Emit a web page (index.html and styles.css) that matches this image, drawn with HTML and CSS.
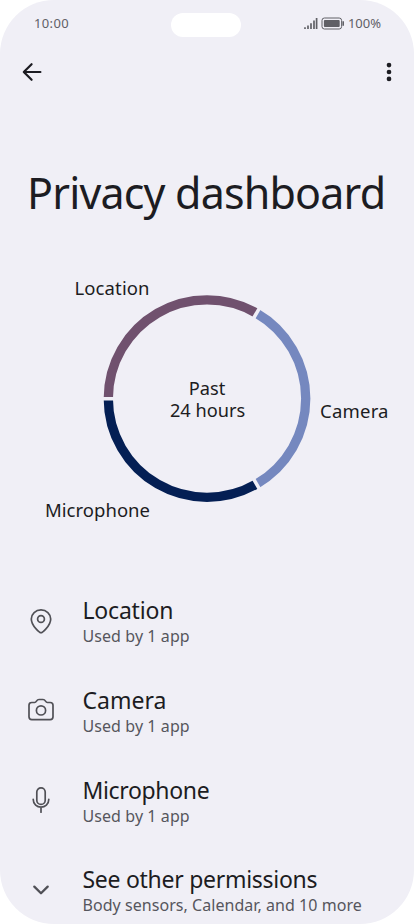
FILE: index.html
```html
<!DOCTYPE html>
<html lang="en">
<head>
<meta charset="utf-8">
<meta name="viewport" content="width=device-width, initial-scale=1">
<title>Privacy dashboard</title>
<link rel="stylesheet" href="styles.css">
</head>
<body>
<main class="screen">
  <header class="status">
    <span class="clock">10:00</span>
    <span class="cutout"></span>
    <div class="indicators">
      <svg class="signal" width="14" height="13" viewBox="0 0 14 13"><path d="M1 10.3V12M4 8.5V12M7 6.2V12M10 3.6V12M12.600 1V12" /></svg>
      <svg class="battery" width="24" height="13" viewBox="0 0 24 13"><rect class="shell" x="1" y="1" width="19.600" height="11" rx="2.400"/><rect class="charge" x="2.900" y="2.900" width="15.800" height="7.200" rx="1"/><path class="cap" d="M22.200 4.200v4.600"/></svg>
      <span class="percent">100%</span>
    </div>
  </header>
  <nav class="toolbar">
    <svg class="back" width="20" height="20" viewBox="0 0 20 20"><path d="M18.400 10H2.200M9.600 2.200L1.800 10l7.800 7.800"/></svg>
    <svg class="more" width="6" height="20" viewBox="0 0 6 20"><circle cx="3" cy="3.100" r="2.350"/><circle cx="3" cy="10" r="2.350"/><circle cx="3" cy="16.900" r="2.350"/></svg>
  </nav>
  <h1 class="heading">Privacy dashboard</h1>
  <svg class="chart" width="414" height="260" viewBox="0 270 414 260">
    <path class="arc location" d="M108.300 398.600A98.700 98.700 0 0 1 256.350 313.100"/>
    <path class="arc camera" d="M256.350 313.100A98.700 98.700 0 0 1 256.350 484.100"/>
    <path class="arc microphone" d="M256.350 484.100A98.700 98.700 0 0 1 108.300 398.600"/>
    <path class="gap" d="M102 398.800H115M253.700 318L260.200 306.800M253.700 479.200L260.200 490.400"/>
    <text x="74.500" y="294.500" textLength="75">Location</text>
    <text x="320" y="418" textLength="68.500">Camera</text>
    <text x="45" y="516.500" textLength="105">Microphone</text>
    <text class="center"><tspan x="207" y="394.500">Past</tspan><tspan x="207.500" y="416.500">24 hours</tspan></text>
  </svg>
  <ul class="list">
    <li class="item">
      <svg class="icon" width="28" height="28" viewBox="0 0 28 28"><path d="M14 25.700C13.200 25.700 4.300 19.200 4.300 12a9.700 9.100 0 0 1 19.400 0C23.700 19.200 14.800 25.700 14 25.700Z"/><circle cx="14" cy="12" r="3.400"/></svg>
      <div class="copy"><h2 class="t-location">Location</h2><p>Used by 1 app</p></div>
    </li>
    <li class="item">
      <svg class="icon" width="28" height="28" viewBox="0 0 28 28"><path d="M4.800 6.500H7.600C9.800 6.500 9.200 3.500 12 3.500H16C18.800 3.500 18.200 6.500 20.400 6.500H23.200Q26 6.500 26 9.300V20.800Q26 23.600 23.200 23.600H4.800Q2 23.600 2 20.800V9.300Q2 6.500 4.800 6.500Z"/><circle cx="14" cy="14.400" r="4.600"/></svg>
      <div class="copy"><h2 class="t-camera">Camera</h2><p>Used by 1 app</p></div>
    </li>
    <li class="item">
      <svg class="icon" width="28" height="28" viewBox="0 0 28 28"><rect x="9.800" y="1.900" width="8.400" height="16.500" rx="4.200"/><path d="M6.200 13.300c0 10.500 15.600 10.500 15.600 0M14 21.200v5"/></svg>
      <div class="copy"><h2 class="t-microphone">Microphone</h2><p>Used by 1 app</p></div>
    </li>
    <li class="item">
      <svg class="icon chevron" width="28" height="28" viewBox="0 0 28 28"><path d="M7.300 10.600L14 17.200L20.700 10.600"/></svg>
      <div class="copy"><h2 class="t-other">See other permissions</h2><p class="s-other">Body sensors, Calendar, and 10 more</p></div>
    </li>
  </ul>
</main>
</body>
</html>
```
FILE: styles.css
```css
* { box-sizing: border-box; margin: 0; padding: 0; }
body { background: #fff; font-family: "Noto Sans", sans-serif; overflow: hidden; }
svg { display: block; flex: none; fill: none; }
.screen { width: 414px; height: 924px; overflow: hidden; border-radius: 54px; background: #f0eff6; color: #1c1c22; }
.status { display: grid; grid-template-columns: 137px 70px 1fr; align-items: center; height: 48px; padding: 0 33px 0 34px; color: #606066; font-size: 13px; }
.clock { padding-bottom: 2px; letter-spacing: .35px; }
.cutout { height: 24px; margin-top: 2px; border-radius: 12px; background: #fff; }
.indicators { display: flex; align-items: center; justify-content: flex-end; padding-bottom: 2px; white-space: nowrap; }
.signal { margin-right: 3px; stroke: #606066; stroke-width: 1.700; }
.battery { margin-right: 3px; stroke: #606066; }
.battery .charge { fill: #606066; stroke: none; }
.battery .cap { stroke-width: 1.600; }
.toolbar { display: flex; align-items: center; justify-content: space-between; height: 48px; padding: 0 22px; }
.back { stroke: #1c1c22; stroke-width: 2.200; stroke-linecap: round; stroke-linejoin: round; }
.more { fill: #1c1c22; }
.heading { height: 174px; padding: 65px 0 0 27px; font-size: 43px; line-height: 64px; font-weight: 400; letter-spacing: -.82px; white-space: nowrap; }
.arc { stroke-width: 9.300; }
.location { stroke: #70516e; }
.camera { stroke: #7588bf; }
.microphone { stroke: #041f54; }
.gap { stroke: #f0eff6; stroke-width: 3.500; }
.chart text { fill: #1c1c22; font-size: 18.500px; }
.chart .center { text-anchor: middle; font-size: 18.200px; }
.list { list-style: none; padding-top: 46px; }
.item { display: flex; align-items: center; height: 89.670px; padding-left: 27px; }
.icon { margin-right: 27.500px; stroke: #505056; stroke-width: 1.700; stroke-linecap: round; stroke-linejoin: round; }
.chevron { stroke-width: 2.300; }
.copy { padding-top: 3px; white-space: nowrap; }
h2 { font-size: 23px; line-height: 28px; font-weight: 400; }
p { font-size: 16px; line-height: 24px; letter-spacing: .08px; color: #56565d; }
.t-location { letter-spacing: -.2px; }
.t-microphone { letter-spacing: -.35px; }
.t-other { letter-spacing: -.28px; }
.s-other { letter-spacing: .05px; }
```
